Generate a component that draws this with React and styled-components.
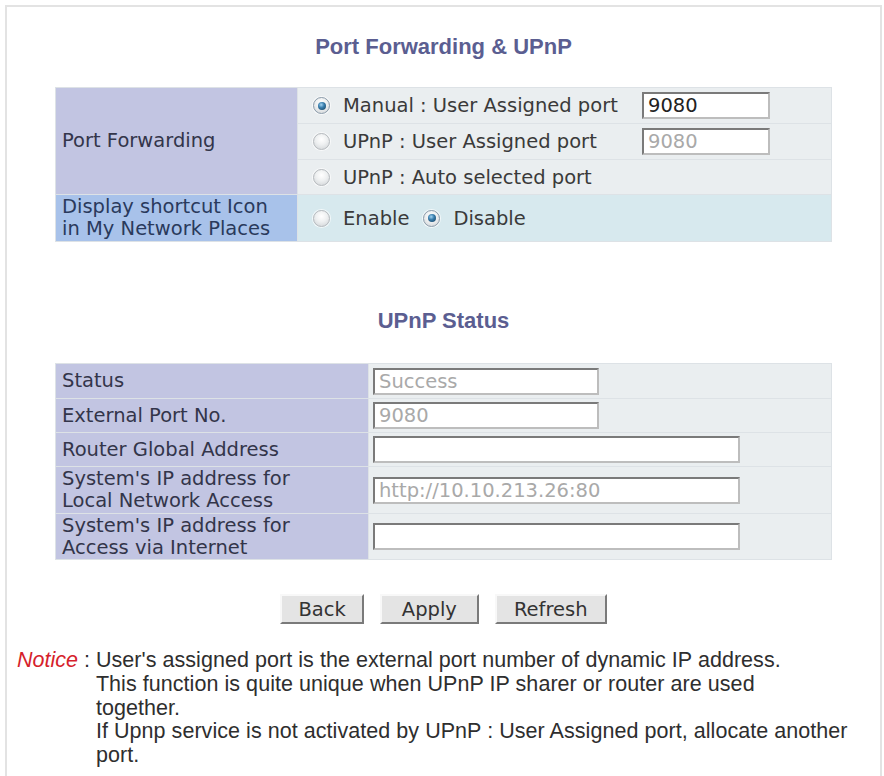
import React from "react";
import styled, { createGlobalStyle, css } from "styled-components";

const GlobalStyle = createGlobalStyle`
  html, body {
    margin: 0;
    padding: 0;
    background: #fff;
  }
  body {
    font-family: "DejaVu Sans", Verdana, sans-serif;
    color: #333;
  }
`;

const Frame = styled.div`
  margin: 5px 0 0 5px;
  width: 873px;
  min-height: 800px;
  border: 2px solid #e3e3e3;
  border-bottom: none;
`;

const Title = styled.h2`
  margin: ${(p) => p.$top}px 0 ${(p) => p.$bottom}px;
  text-align: center;
  font: bold 22px/26px "Liberation Sans", Arial, sans-serif;
  color: #5b5e91;
`;

const Table = styled.table`
  width: 777px;
  margin: 0 auto;
  border-collapse: collapse;
  border: 1px solid #c4c9ce;
  font-size: 19.5px;
  line-height: 21px;
`;

const Row = styled.tr`
  height: ${(p) => p.$h}px;
`;

const labelTones = {
  lavender: { bg: "#c2c5e2", fg: "#33354a" },
  blue: { bg: "#a8c2ea", fg: "#2a3a5c" },
};

const valueTones = {
  grey: "#eaeef0",
  cyan: "#d7e9ee",
};

const LabelCell = styled.td`
  width: ${(p) => p.$w}px;
  padding: 0 6px;
  border: 1px solid #dde2e6;
  background: ${(p) => labelTones[p.$tone || "lavender"].bg};
  color: ${(p) => labelTones[p.$tone || "lavender"].fg};
  vertical-align: middle;
  line-height: 22px;
`;

const ValueCell = styled.td`
  padding: 0 0 0 ${(p) => p.$pad ?? 15}px;
  border: 1px solid #dde2e6;
  background: ${(p) => valueTones[p.$tone || "grey"]};
  vertical-align: middle;
`;

const OptionLine = styled.div`
  display: flex;
  align-items: center;
`;

const Option = styled.label`
  display: inline-flex;
  align-items: center;
  gap: 13px;
  width: ${(p) => (p.$w ? `${p.$w}px` : "auto")};
  margin-right: ${(p) => p.$mr || 0}px;
  color: #3a3a3a;
  white-space: nowrap;
`;

const Radio = styled.span`
  position: relative;
  flex: none;
  box-sizing: border-box;
  width: 17px;
  height: 17px;
  border-radius: 50%;
  border: 1px solid ${(p) => (p.$checked ? "#8c9cab" : "#b7bbbf")};
  background: radial-gradient(circle at 50% 35%, #ffffff 0, #eef0f1 45%, #cdd1d4 100%);
  box-shadow: 0 0 0 1px rgba(255, 255, 255, 0.7);
  ${(p) =>
    p.$checked &&
    css`
      &::after {
        content: "";
        position: absolute;
        left: 3.5px;
        top: 3.5px;
        width: 8px;
        height: 8px;
        border-radius: 50%;
        background: radial-gradient(circle at 40% 35%, #a4d4f2 0, #3a7fae 40%, #123a58 100%);
      }
    `}
`;

const TextBox = styled.input`
  box-sizing: border-box;
  width: ${(p) => p.$w}px;
  height: 27px;
  margin: 0;
  padding: 0 4px;
  border: 2px solid;
  border-color: #7a7a7a #bdbdbd #bdbdbd #7a7a7a;
  background: #fff;
  font: 19.5px "DejaVu Sans", Verdana, sans-serif;
  color: ${(p) => (p.$muted ? "#a9a9a9" : "#222")};
  outline: none;
`;

const ButtonBar = styled.div`
  display: flex;
  justify-content: center;
  gap: 16px;
  margin-top: 34px;
`;

const Button = styled.button`
  height: 30px;
  padding: 0 ${(p) => p.$pad || 16}px;
  font: 19.5px "DejaVu Sans", Verdana, sans-serif;
  color: #333;
  background: #e4e4e4;
  border: 2px solid;
  border-color: #f8f8f8 #7a7a7a #7a7a7a #f8f8f8;
  cursor: pointer;
`;

const Notice = styled.div`
  display: flex;
  gap: 6px;
  margin: 25px 0 0 10px;
  font: 21.5px/23.8px "Liberation Sans", Arial, sans-serif;
  color: #2e2e2e;
`;

const NoticeHead = styled.div`
  white-space: pre;
`;

const NoticeTag = styled.span`
  color: #d61f2c;
  font-style: italic;
`;

const NoticeBody = styled.div`
  display: flex;
  flex-direction: column;
  letter-spacing: 0.05px;
`;

const NoticeLine = styled.span`
  white-space: nowrap;
`;

export default function App() {
  return (
    <>
      <GlobalStyle />
      <Frame>
        <Title $top={27} $bottom={27}>
          Port Forwarding &amp; UPnP
        </Title>
        <Table>
          <tbody>
            <Row $h={36}>
              <LabelCell $w={229} rowSpan={3}>
                Port Forwarding
              </LabelCell>
              <ValueCell>
                <OptionLine>
                  <Option $w={329}>
                    <Radio $checked />
                    Manual : User Assigned port
                  </Option>
                  <TextBox $w={128} defaultValue="9080" />
                </OptionLine>
              </ValueCell>
            </Row>
            <Row $h={36}>
              <ValueCell>
                <OptionLine>
                  <Option $w={329}>
                    <Radio />
                    UPnP : User Assigned port
                  </Option>
                  <TextBox $w={128} $muted readOnly defaultValue="9080" />
                </OptionLine>
              </ValueCell>
            </Row>
            <Row $h={35}>
              <ValueCell>
                <OptionLine>
                  <Option>
                    <Radio />
                    UPnP : Auto selected port
                  </Option>
                </OptionLine>
              </ValueCell>
            </Row>
            <Row $h={47}>
              <LabelCell $tone="blue">
                Display shortcut Icon
                <br />
                in My Network Places
              </LabelCell>
              <ValueCell $tone="cyan">
                <OptionLine>
                  <Option $mr={14}>
                    <Radio />
                    Enable
                  </Option>
                  <Option>
                    <Radio $checked />
                    Disable
                  </Option>
                </OptionLine>
              </ValueCell>
            </Row>
          </tbody>
        </Table>

        <Title $top={66} $bottom={29}>
          UPnP Status
        </Title>
        <Table>
          <tbody>
            <Row $h={35}>
              <LabelCell $w={300}>Status</LabelCell>
              <ValueCell $pad={4}>
                <TextBox $w={226} $muted readOnly defaultValue="Success" />
              </ValueCell>
            </Row>
            <Row $h={34}>
              <LabelCell>External Port No.</LabelCell>
              <ValueCell $pad={4}>
                <TextBox $w={226} $muted readOnly defaultValue="9080" />
              </ValueCell>
            </Row>
            <Row $h={34}>
              <LabelCell>Router Global Address</LabelCell>
              <ValueCell $pad={4}>
                <TextBox $w={367} readOnly defaultValue="" />
              </ValueCell>
            </Row>
            <Row $h={47}>
              <LabelCell>
                System's IP address for
                <br />
                Local Network Access
              </LabelCell>
              <ValueCell $pad={4}>
                <TextBox $w={367} $muted readOnly defaultValue="http://10.10.213.26:80" />
              </ValueCell>
            </Row>
            <Row $h={46}>
              <LabelCell>
                System's IP address for
                <br />
                Access via Internet
              </LabelCell>
              <ValueCell $pad={4}>
                <TextBox $w={367} readOnly defaultValue="" />
              </ValueCell>
            </Row>
          </tbody>
        </Table>

        <ButtonBar>
          <Button>Back</Button>
          <Button $pad={20}>Apply</Button>
          <Button $pad={17}>Refresh</Button>
        </ButtonBar>

        <Notice>
          <NoticeHead>
            <NoticeTag>Notice</NoticeTag>
            {" :"}
          </NoticeHead>
          <NoticeBody>
            <NoticeLine>User's assigned port is the external port number of dynamic IP address.</NoticeLine>
            <NoticeLine>This function is quite unique when UPnP IP sharer or router are used</NoticeLine>
            <NoticeLine>together.</NoticeLine>
            <NoticeLine>If Upnp service is not activated by UPnP : User Assigned port, allocate another</NoticeLine>
            <NoticeLine>port.</NoticeLine>
          </NoticeBody>
        </Notice>
      </Frame>
    </>
  );
}
